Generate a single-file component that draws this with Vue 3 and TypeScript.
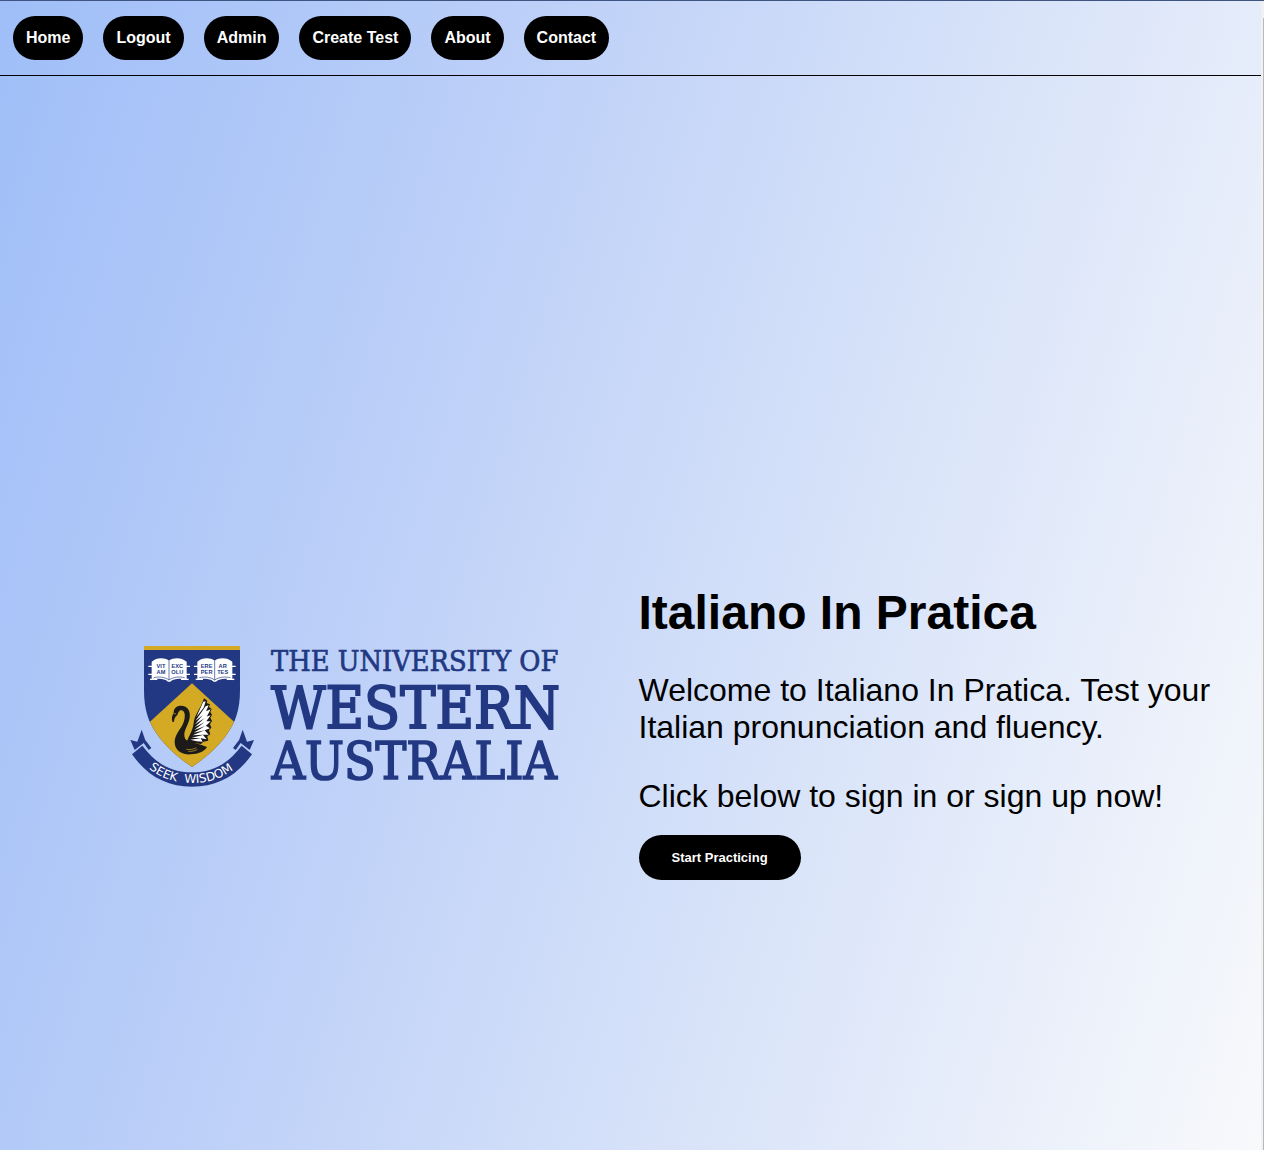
<script setup lang="ts">
interface NavItem {
  label: string
  href: string
}

const navItems: NavItem[] = [
  { label: 'Home', href: '#home' },
  { label: 'Logout', href: '#logout' },
  { label: 'Admin', href: '#admin' },
  { label: 'Create Test', href: '#create-test' },
  { label: 'About', href: '#about' },
  { label: 'Contact', href: '#contact' },
]
</script>

<template>
  <div class="shell">
    <div class="page">
      <nav class="nav" aria-label="Main">
        <a v-for="item in navItems" :key="item.label" class="nav-link" :href="item.href">{{ item.label }}</a>
      </nav>

      <main class="hero">
        <div class="hero-logo">
          <svg class="logo" viewBox="30 30 1290 426" role="img" aria-label="The University of Western Australia">
            <defs>
              <clipPath id="shield-clip">
                <path d="M72 33H360V165C360 225 346 262 322 296C296 334 256 369 216 396C176 369 136 334 110 296C86 262 72 225 72 165Z" />
              </clipPath>
              <path id="motto-arc" d="M85 399C125 431 165 444 216 444C267 444 312 429 356 391" />
              <g id="book">
                <path class="clasp" d="M85 94H97M85 118H97M90 133H112M198 94H210M198 118H210M183 133H206" />
                <path class="paper" d="M95 136V80C110 67 133 67 147 77C161 67 184 67 200 80V136C184 129 163 130 151 140H144C132 130 111 129 95 136Z" />
                <path class="fold" d="M147 78V135" />
                <path class="fold" d="M101 128C117 124 134 126 147 135C160 126 178 124 194 128" />
              </g>
            </defs>

            <g clip-path="url(#shield-clip)">
              <rect class="navy" x="72" y="33" width="288" height="364" />
              <rect class="gold" x="72" y="33" width="288" height="12" />
              <path class="gold" d="M216 145L356 273V400H76V273Z" />
            </g>

            <use href="#book" />
            <use href="#book" x="137" />
            <g class="book-text">
              <text x="123" y="98">VIT</text>
              <text x="123" y="118">AM</text>
              <text x="172" y="98">EXC</text>
              <text x="172" y="118">OLU</text>
              <text x="260" y="98">ERE</text>
              <text x="260" y="118">PER</text>
              <text x="308" y="98">AR</text>
              <text x="308" y="118">TES</text>
            </g>

            <path class="swan" d="M157 260C154 248 157 240 161 235C160 220 170 212 183 212C203 212 212 228 209 248C206 267 195 280 193 296C192 307 196 315 204 318C222 325 238 326 261 336C253 350 235 357 213 358C184 360 165 345 164 323C163 299 182 284 190 264C197 246 196 228 185 226C177 225 175 233 172 240C167 245 163 248 162 261Z" />
            <path class="swan" d="M201 319C207 302 219 285 221 264C223 239 242 222 252 190L262 197L260 204L270 208L267 216L275 222L271 231L276 239L271 248L276 258L270 267L274 278L267 286L271 298L262 304L265 317L250 320L243 327L227 325L218 328Z" />
            <path class="feather" d="M229 246L250 200L257 199L251 218ZM226 258L257 214L266 211L256 234ZM225 268L258 229L272 223L260 245ZM224 277L258 245L272 241L259 259ZM223 285L258 258L272 259L258 272ZM221 293L257 272L270 280L254 286ZM218 301L254 286L266 299L249 299ZM215 308L249 300L260 313L244 310ZM211 314L242 310L248 320L230 319Z" />
            <path class="swan-line" d="M199 343C211 345 220 343 229 338M205 349C215 350 224 348 232 343" />
            <circle class="beak" cx="165" cy="236" r="2" />

            <path class="navy" d="M67 332C108 386 152 412 216 412C280 412 324 386 365 332L396 358C350 424 290 455 216 455C142 455 82 424 36 358Z" />
            <path class="navy" d="M65 284L76 316L81 322L94 339L86 345L71 324L44 345L31 315L52 320Z" />
            <path class="navy" d="M368 284L357 316L352 322L339 339L347 345L362 324L389 345L402 315L381 320Z" />

            <text class="motto"><textPath href="#motto-arc" startOffset="2">SEEK</textPath></text>
            <text class="motto"><textPath href="#motto-arc" startOffset="118">WISDOM</textPath></text>

            <text class="name name-top" x="453" y="108">THE UNIVERSITY OF</text>
            <text class="name name-mid" x="454" y="280">WESTERN</text>
            <text class="name name-end" x="455" y="432">AUSTRALIA</text>
          </svg>
        </div>

        <section class="hero-text">
          <h1>Italiano In Pratica</h1>
          <p>Welcome to Italiano In Pratica. Test your Italian pronunciation and fluency.</p>
          <p>Click below to sign in or sign up now!</p>
          <button class="start" type="button">Start Practicing</button>
        </section>
      </main>
    </div>
    <div class="scroll-edge" aria-hidden="true"></div>
  </div>
</template>

<style>
body {
  margin: 0;
}
</style>

<style scoped>
.shell {
  box-sizing: border-box;
  display: flex;
  min-height: 100vh;
  border-top: 1px solid #3d5580;
  font-family: "Liberation Sans", Arial, sans-serif;
  color: #000;
}

.page {
  flex: 1;
  min-width: 0;
  background: linear-gradient(107deg, #9fbef8 0%, #bdd0f8 34%, #d5e1f9 60%, #f8f9fb 100%);
}

.scroll-edge {
  box-sizing: border-box;
  width: 3px;
  padding-top: 17px;
  background: #f0f1f2;
  display: flex;
  justify-content: flex-end;
}

.scroll-edge::after {
  content: "";
  width: 1px;
  background: #b8b8b8;
}

.nav {
  display: flex;
  flex-wrap: wrap;
  gap: 20px;
  padding: 15px 13px;
  border-bottom: 1px solid #000;
}

.nav-link {
  padding: 0 13px;
  border-radius: 24px;
  background: #000;
  color: #fff;
  font-size: 16px;
  font-weight: 700;
  line-height: 44px;
  text-decoration: none;
}

.hero {
  display: grid;
  grid-template-columns: 1fr 1fr;
  padding: 509px 0 160px;
}

.hero-logo {
  display: flex;
  justify-content: center;
  padding: 60px 0 0 60px;
}

.logo {
  width: 430px;
  height: 142px;
  overflow: visible;
}

.hero-text {
  padding: 0 32px 0 8px;
}

h1 {
  margin: 0 0 32px;
  font-size: 48px;
  line-height: 55px;
}

p {
  margin: 0 0 32px;
  font-size: 32px;
  line-height: 37px;
}

.start {
  display: block;
  margin-top: -12px;
  padding: 0 33px;
  border: 0;
  border-radius: 24px;
  background: #000;
  color: #fff;
  font-family: inherit;
  font-size: 13px;
  font-weight: 700;
  line-height: 45px;
}

.navy {
  fill: #233882;
}

.gold {
  fill: #d4aa25;
}

.paper {
  fill: #fff;
}

.clasp {
  fill: none;
  stroke: #fff;
  stroke-width: 4;
}

.fold {
  fill: none;
  stroke: #233882;
  stroke-width: 2;
}

.book-text {
  fill: #233882;
  font-size: 17px;
  font-weight: 700;
  text-anchor: middle;
}

.swan {
  fill: #1c1b19;
}

.feather {
  fill: #fff;
}

.swan-line {
  fill: none;
  stroke: #d4aa25;
  stroke-width: 2;
}

.beak {
  fill: #d4aa25;
}

.motto {
  fill: #fff;
  font-family: "DejaVu Sans", sans-serif;
  font-size: 36px;
}

.name {
  fill: #233882;
  stroke: #233882;
  font-family: "DejaVu Serif Condensed", "DejaVu Serif", serif;
}

.name-top {
  font-size: 86px;
  stroke-width: 2;
}

.name-mid {
  font-size: 176px;
  stroke-width: 6;
}

.name-end {
  font-size: 154px;
  stroke-width: 5;
}
</style>
